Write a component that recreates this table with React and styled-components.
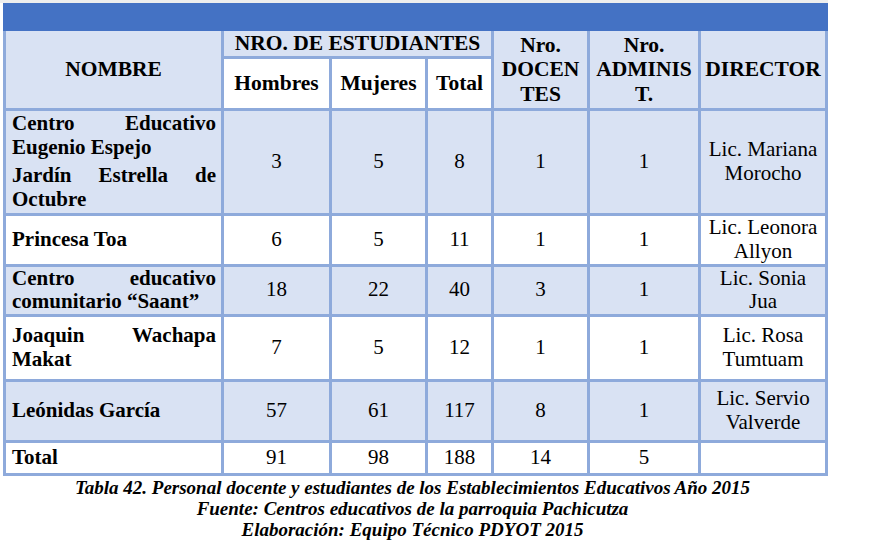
import React from "react";
import styled, { createGlobalStyle, css } from "styled-components";

const SERIF = `"Liberation Serif", "Times New Roman", serif`;

const GlobalStyle = createGlobalStyle`
  body {
    margin: 0;
    background: #ffffff;
    font-family: ${SERIF};
    color: #000000;
  }
`;

const BORDER = "#8eaadb";
const SHADE = "#d9e2f3";
const BLUE = "#4472c4";

const Page = styled.div`
  width: 828px;
  font-family: ${SERIF};
`;

const TopStrip = styled.div`
  height: 3px;
  background: #eeeeee;
`;

const Frame = styled.div`
  padding-left: 3px;
`;

const Banner = styled.div`
  width: 825px;
  height: 28px;
  background: ${BLUE};
`;

const Table = styled.table`
  width: 825px;
  border-collapse: collapse;
  table-layout: fixed;
  font-family: ${SERIF};
`;

const Row = styled.tr`
  height: ${(p) => p.$h}px;
  background: ${(p) => (p.$shade ? SHADE : "#ffffff")};
`;

const cellBase = css`
  border: 3px solid ${BORDER};
  padding: 0 4px;
  vertical-align: middle;
  text-align: center;
  font-family: ${SERIF};
  font-size: 21px;
  line-height: 23.5px;
`;

const Head = styled.th`
  ${cellBase}
  font-weight: bold;
  font-size: 21.5px;
  line-height: 24.5px;
  background: ${(p) => (p.$white ? "#ffffff" : SHADE)};
  ${(p) => p.$top && "border-top: none;"}
`;

const Cell = styled.td`
  ${cellBase}
  font-weight: normal;
`;

const NameCell = styled.td`
  ${cellBase}
  padding: 0 5px 0 6px;
  text-align: justify;
  font-weight: bold;
  font-size: 21px;
  line-height: 23.5px;
`;

const Para = styled.div`
  text-align: justify;
  & + & {
    margin-top: 5px;
  }
`;

const Caption = styled.div`
  width: 825px;
  margin-top: 1px;
  text-align: center;
  font-family: ${SERIF};
  font-style: italic;
  font-weight: bold;
  font-size: 19px;
  line-height: 21px;
`;

const rows = [
  {
    name: ["Centro Educativo Eugenio Espejo", "Jardín Estrella de Octubre"],
    h: 105,
    shade: true,
    vals: ["3", "5", "8", "1", "1"],
    dir: ["Lic. Mariana", "Morocho"],
  },
  { name: ["Princesa Toa"], h: 51, vals: ["6", "5", "11", "1", "1"], dir: ["Lic. Leonora", "Allyon"] },
  {
    name: ["Centro educativo comunitario “Saant”"],
    h: 50,
    shade: true,
    vals: ["18", "22", "40", "3", "1"],
    dir: ["Lic. Sonia", "Jua"],
  },
  { name: ["Joaquin Wachapa Makat"], h: 65, vals: ["7", "5", "12", "1", "1"], dir: ["Lic. Rosa", "Tumtuam"] },
  {
    name: ["Leónidas García"],
    h: 61,
    shade: true,
    vals: ["57", "61", "117", "8", "1"],
    dir: ["Lic. Servio", "Valverde"],
  },
];

const widths = [218, 108, 96, 66, 96, 111, 127];

const App = () => {
  return (
    <Page>
      <GlobalStyle />
      <TopStrip />
      <Frame>
        <Banner />
        <Table>
          <colgroup>
            {widths.map((w, i) => (
              <col key={i} style={{ width: w }} />
            ))}
          </colgroup>
          <thead>
            <Row $h={25.5}>
              <Head $top rowSpan={2}>NOMBRE</Head>
              <Head $top colSpan={3}>NRO. DE ESTUDIANTES</Head>
              <Head $top rowSpan={2}>
                Nro.
                <br />
                DOCEN
                <br />
                TES
              </Head>
              <Head $top rowSpan={2}>
                Nro.
                <br />
                ADMINIS
                <br />
                T.
              </Head>
              <Head $top rowSpan={2}>DIRECTOR</Head>
            </Row>
            <Row $h={52}>
              <Head $white>Hombres</Head>
              <Head $white>Mujeres</Head>
              <Head $white>Total</Head>
            </Row>
          </thead>
          <tbody>
            {rows.map((r, i) => (
              <Row key={i} $h={r.h} $shade={r.shade}>
                <NameCell>
                  {r.name.map((n, j) => (
                    <Para key={j}>{n}</Para>
                  ))}
                </NameCell>
                {r.vals.map((v, j) => (
                  <Cell key={j}>{v}</Cell>
                ))}
                <Cell>
                  {r.dir[0]}
                  <br />
                  {r.dir[1]}
                </Cell>
              </Row>
            ))}
            <Row $h={33}>
              <NameCell>Total</NameCell>
              <Cell>91</Cell>
              <Cell>98</Cell>
              <Cell>188</Cell>
              <Cell>14</Cell>
              <Cell>5</Cell>
              <Cell />
            </Row>
          </tbody>
        </Table>
      </Frame>
      <Caption>
        Tabla 42. Personal docente y estudiantes de los Establecimientos Educativos Año 2015
        <br />
        Fuente: Centros educativos de la parroquia Pachicutza
        <br />
        Elaboración: Equipo Técnico PDYOT 2015
      </Caption>
    </Page>
  );
};

export default App;
